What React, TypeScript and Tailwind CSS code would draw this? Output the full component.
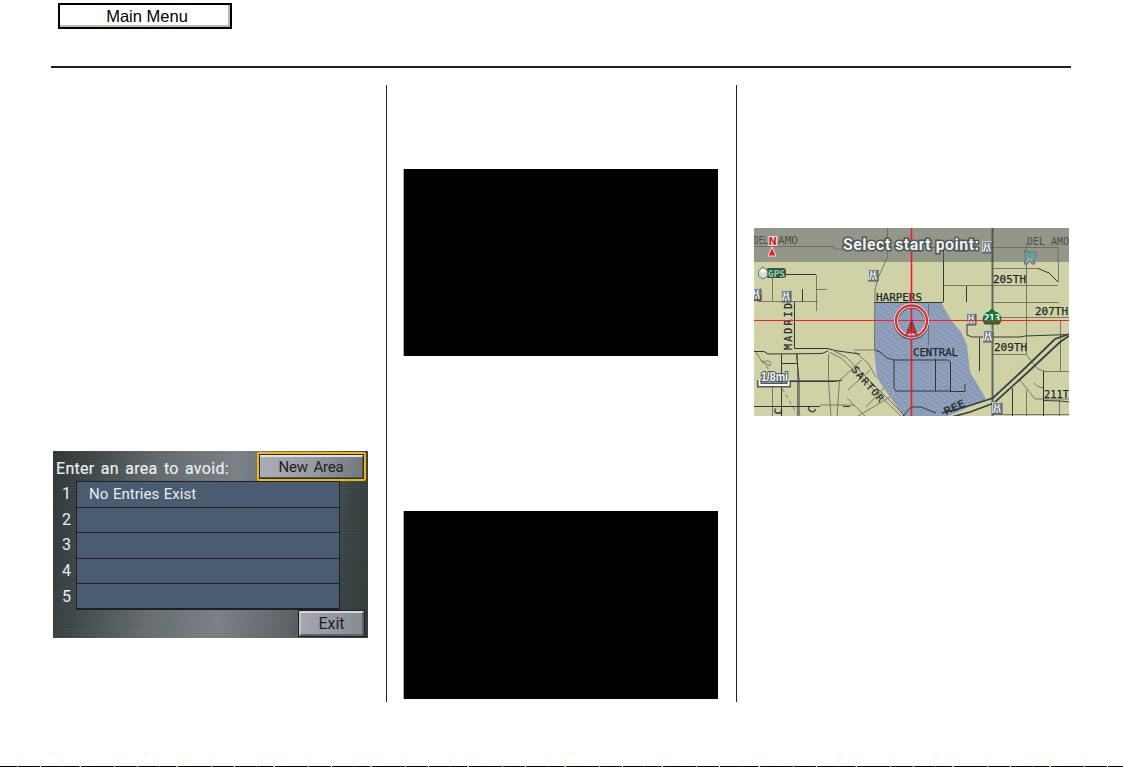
const rows = ["No Entries Exist", "", "", "", ""]

const AvoidPanel = () => {
  return (
    <div className="w-[315px] h-[187px] overflow-hidden font-[Roboto,sans-serif] text-[#e9edef] bg-[repeating-linear-gradient(0deg,rgba(255,255,255,0.05)_0px,rgba(0,0,0,0.06)_1px,transparent_3px),linear-gradient(97deg,#303939_0%,#414a4b_12%,#687174_35%,#7c848a_55%,#5f686c_75%,#3c4545_90%,#343d3d_100%)]">
      <div className="flex h-[30px] justify-between pt-px pr-[2px]">
        <div className="pl-[3px] pt-[7px] text-[16px] leading-5 whitespace-nowrap tracking-[0.3px] [word-spacing:2px] [-webkit-text-stroke:0.2px]">
          Enter an area to avoid:
        </div>
        <div className="flex h-[29px] w-[109px] shrink-0 rounded-[2px] border-2 border-[#f2b90c] bg-[#292b2c] p-px">
          <div className="flex flex-1 items-center justify-center border-t-2 border-r border-b border-t-[#dfe2e6] border-r-[#55595c] border-b-[#55595c] bg-gradient-to-r from-[#a9adb5] via-[#989da4] to-[#72787c] text-[15px] tracking-[-0.2px] [word-spacing:2px] text-[#231f20]">
            New Area
          </div>
        </div>
      </div>
      <div className="flex">
        <div className="w-[23px]">
          {rows.map((_, i) => (
            <div key={i} className="flex h-[25.6px] items-center justify-center pl-1 pt-px text-[16px]">
              {i + 1}
            </div>
          ))}
        </div>
        <div className="h-[129px] w-[264px] border border-b-2 border-[#231f20] bg-[#4a5c72]">
          {rows.map((row, i) => (
            <div
              key={i}
              className="flex h-[25.6px] items-center border-b border-[#231f20] pl-3 text-[15px] [word-spacing:1px] last:border-b-0"
            >
              {row}
            </div>
          ))}
        </div>
      </div>
      <div className="mr-[3px] ml-auto flex h-[27px] w-[67px] border border-[#231f20]">
        <div className="flex flex-1 items-center justify-center border-2 border-t-[#d3d5da] border-r-[#5d6468] border-b-[#5d6468] border-l-[#bfc4c9] bg-gradient-to-r from-[#a3a8b1] to-[#858b91] text-[16px] text-[#231f20]">
          Exit
        </div>
      </div>
    </div>
  )
}

// highway exit marker
const Exchange = ({ x, y }: { x: number; y: number }) => (
  <g transform={`translate(${x} ${y})`}>
    <rect x="-5" y="-6" width="10" height="12" fill="#7b8588" />
    <path d="M-4.5 5.5V-5.5H4.5" stroke="#c3cacd" fill="none" />
    <path d="M-3.3 4.5L-1.8 0V-4M3.3 4.5L1.8 0V-4M-1.8 -1H1.8M0 2V5" stroke="#f2f5f5" strokeWidth="1.2" fill="none" />
    <path d="M5 -5V6H-5" stroke="#4d5558" fill="none" />
  </g>
)

const labels = [
  { text: "HARPERS", x: 876, y: 301, w: 46 },
  { text: "CENTRAL", x: 913, y: 356, w: 45 },
  { text: "205TH", x: 993, y: 283, w: 33 },
  { text: "207TH", x: 1035, y: 315, w: 33 },
  { text: "209TH", x: 994, y: 351, w: 33 },
  { text: "211T", x: 1044, y: 398, w: 25 },
]

const MapView = () => {
  return (
    <svg width="315" height="188" viewBox="754 228 315 188" className="block" fontFamily="'DejaVu Sans Mono', monospace">
      <defs>
        <pattern id="water" width="8" height="8" patternUnits="userSpaceOnUse">
          <rect width="8" height="8" fill="#8a9cba" />
          <path d="M0 .5h2M4 1.5h2M2 3.5h1M6 4.5h2M3 6.5h2M0 5.5h1" stroke="#a3abb6" />
          <path d="M3 .5h1M0 2.5h2M5 3.5h1M2 5.5h1M6 6.5h1" stroke="#788eb5" />
        </pattern>
      </defs>
      <rect x="754" y="228" width="315" height="188" fill="#d0d2a6" />
      <path d="M874 302H941L951 320L961 332L967 345L970 372L979 387L986 399L960 411L948 416H903L877 378L874 350Z" fill="url(#water)" />

      {/* side streets */}
      <g fill="none" stroke="#777966" strokeWidth="1">
        <path d="M772.5 278V301M758 301.5H818M816.5 275V311M816 289.5H827M887.5 228V257L878 278L875 290L874.5 350" />
        <path d="M943 285.5H1058M992 268.5H1038M992 302.5H1059M992 317.5H1069M1026.5 243V355L1038 369L1045 371.5H1069M1058.5 248V282M1060.5 321V371" />
        <path d="M992 354.5H1026M1020 380L1035 399H1069M1034 383Q1037 387 1043 388M1026.5 390V416M1059.5 400V416M992 414.5H1069" />
        <path d="M928.5 303V345M772.5 385V416M839.5 380L837 416M790 380.5H842M828.5 354V381L831 416M854 405H820M797.5 354V416" />
        <path d="M829 352L841 358L901 416M834 351L846 357L905 416M855 352L868 363L876 377M858 416L890 397M841 379L862 360M848 390L870 370M866 407L884 388M847 398L865 416M854 350H875" />
        <path d="M756 352L762 362L770 366Q772 360 766 361L762 363" />
        <path d="M762 360L783 390L797 414" strokeDasharray="4 3" />
      </g>
      <g fill="none" stroke="#33373b" strokeWidth="1">
        <path d="M786 274.5H816M802.5 289V302M794.5 302V348.5H827L838 351L860 354M754 351.5H764L768 354L822 353.5L828 351" />
        <path d="M781.5 354V416M796.5 354L799 380V416M781 363.5H797M754 406.5H820M778 381.5H835L842 380M843 406.5H850" />
        <path d="M943.5 248V302M874 302.5H943M966.5 286V302M967 325V335L972 337H1020L1025 336L1069 334.5M979.5 338V371" />
        <path d="M1038 268.5L1049 273L1058 282M1043.5 371V416M1012.5 388V416M1043 400.5L1060 401L1069 402" />
        <path d="M875 350L880 352L887 358L894 360H948L950.5 362V391H896L894 388V360M935.5 359V391M950 391.5H965V384M903 416L911 407L921 407L936 413" />
      </g>
      <path d="M992.5 228V416" stroke="#60645e" strokeWidth="2" />
      <g fill="none" stroke="#3b3f40" strokeWidth="1.8">
        <path d="M942 413L965 407L993 398L1022 371L1055 339L1069 334" />
        <path d="M948 418L970 412L994 403L1028 372L1060 342L1069 336" />
      </g>

      {/* road names */}
      <g fontSize="10" fill="#25282b" stroke="#25282b" strokeWidth="0.25">
        {labels.map((l) => (
          <text key={l.text} x={l.x} y={l.y} textLength={l.w} lengthAdjust="spacingAndGlyphs">
            {l.text}
          </text>
        ))}
        <text transform="translate(792 350) rotate(-90)" textLength="47">MADRID</text>
        <text transform="translate(851 370) rotate(49)" textLength="43">SARTOR</text>
        <text transform="translate(946 415) rotate(-25)" textLength="22" lengthAdjust="spacingAndGlyphs">REE</text>
        <text transform="translate(781 415) rotate(-80)">C</text>
        <text transform="translate(813 414) rotate(-60)">C</text>
      </g>

      {/* title band */}
      <rect x="754" y="228" width="315" height="34" fill="#92978a" />
      <g fill="none" stroke="#6b7067">
        <path d="M754 246.5H834V249H845M925 247.5H943M982 247.5H1058V262M887.5 228V257L885 262M1026.5 243V262" />
        <path d="M943.5 247V262" stroke="#464c48" />
        <path d="M992.5 228V262" stroke="#51564f" strokeWidth="2" />
      </g>
      <g fontSize="10" fill="#4b504a">
        <text x="754" y="244" textLength="14" lengthAdjust="spacingAndGlyphs">DEL</text>
        <text x="778" y="244" textLength="20" lengthAdjust="spacingAndGlyphs">AMO</text>
        <text x="1027" y="245" textLength="42" lengthAdjust="spacingAndGlyphs">DEL AMO</text>
      </g>

      <Exchange x={987} y={247} />
      <Exchange x={873} y={275} />
      <Exchange x={786} y={296} />
      <Exchange x={756} y={294} />
      <Exchange x={971} y={319} />
      <Exchange x={988} y={336} />
      <Exchange x={997} y={408} />
      <path d="M754 300.5H761V295" stroke="#8a2d28" fill="none" />

      {/* shop marker */}
      <path d="M1024 250L1027 252H1036V257L1033 260L1035 264H1032L1030 261L1027 264H1024L1026 258Z" fill="#8fa3a8" stroke="#616b70" />
      <path d="M1025 253H1035L1033 258H1028Z" fill="#4fa3a8" />

      {/* north arrow */}
      <text x="768.5" y="245" fontSize="10" fontWeight="bold" fontFamily="'DejaVu Sans', sans-serif" fill="#e0202a" stroke="#f4e9e6" strokeWidth="2" paintOrder="stroke">N</text>
      <path d="M772 247L776 256H768Z" fill="#ec1c24" stroke="#f3dede" />

      {/* gps badge */}
      <rect x="766" y="268" width="20" height="10" rx="3" fill="#39514a" />
      <text x="768" y="276.5" fontSize="9" fontWeight="bold" textLength="17" lengthAdjust="spacingAndGlyphs" fill="#8bdc9c">GPS</text>
      <path d="M763 267L767.5 270.5V276L763 279L758.5 276V270.5Z" fill="#d7dcdc" stroke="#6c7473" />
      <path d="M760 271L763 269L766 271L763 273Z" fill="#fff" />

      {/* route shield */}
      <path d="M983 321Q983 313 989 312L992 309L995 312Q1001 313 1001 321L999 324H985Z" fill="#16783f" stroke="#0f5c31" />
      <text x="984" y="321" fontSize="9" fontWeight="bold" fill="#fff" textLength="16" lengthAdjust="spacingAndGlyphs">213</text>

      {/* scale */}
      <path d="M759.5 380V385H788.5V380" fill="none" stroke="#4c5960" strokeWidth="5" />
      <path d="M759.5 379V385H788.5V379" fill="none" stroke="#f4f6f4" strokeWidth="2" />
      <g fontSize="12" fontWeight="bold" fontFamily="'Liberation Sans', sans-serif">
        <text x="761" y="380.5" textLength="27" lengthAdjust="spacingAndGlyphs" fill="#f5f7f8" stroke="#4c5960" strokeWidth="2.2" paintOrder="stroke">1/8mi</text>
      </g>

      {/* cursor */}
      <path d="M911.5 228V416" stroke="#f01c22" strokeWidth="1.6" />
      <path d="M754 320.5H1069" stroke="#ff1c20" strokeWidth="1.2" />
      <circle cx="911.5" cy="322" r="15.5" fill="none" stroke="#4e5358" strokeWidth="4.5" />
      <circle cx="911.5" cy="321" r="15.5" fill="none" stroke="#f4efef" strokeWidth="4" />
      <circle cx="911.5" cy="321" r="15.5" fill="none" stroke="#e5262b" strokeWidth="2.3" />
      <path d="M911.5 320L917 335L911.5 331L906 335Z" fill="#ee2329" stroke="#514349" />
      <path d="M911.5 321V331" stroke="#a31c20" />
      <text x="843" y="249.5" fontSize="16" fontWeight="bold" fontFamily="Roboto, sans-serif" textLength="136" lengthAdjust="spacing" fill="#eff1ef" stroke="#4d5555" strokeWidth="3" paintOrder="stroke">
        Select start point:
      </text>
    </svg>
  )
}

const App = () => {
  return (
    <div className="flex h-[767px] w-[1123px] flex-col overflow-hidden bg-white">
      <header className="mx-[51px] h-[68px] w-[1020px] shrink-0 border-b-2 border-[#231f20] pt-[3px] pl-[7px]">
        <div className="h-[26px] w-[174px] border-2 border-black">
          <div className="flex h-[22px] items-center justify-center border-r-2 border-b-2 border-[#b9b9b9] pt-[3px] pl-[6px] font-['Liberation_Sans',sans-serif] text-[16.5px] leading-none text-black">
            Main Menu
          </div>
        </div>
      </header>
      <main className="mt-[17px] ml-[53px] flex h-[617px] shrink-0">
        <section className="w-[334px] border-r border-[#231f20] pt-[366px]">
          <AvoidPanel />
        </section>
        <section className="flex w-[350px] flex-col gap-[155px] border-r border-[#231f20] pt-[84px] pl-4">
          <div className="h-[187px] w-[315px] shrink-0 border-l border-[#aaa] bg-black" />
          <div className="h-[188px] w-[315px] shrink-0 border-l border-[#aaa] bg-black" />
        </section>
        <section className="pt-[143px] pl-[17px]">
          <MapView />
        </section>
      </main>
      <footer className="mt-auto h-px shrink-0 bg-[repeating-linear-gradient(90deg,#000_0_17px,#00ffff_17px_18px,#000_18px_39px,#0000ff_39px_40px,#fff_40px_41px,#000_41px_62px,#00aa00_62px_63px,#000_63px_79px,#cc5500_79px_80px,#ffff00_80px_81px,#000_81px_97px)]" />
    </div>
  )
}

export default App
